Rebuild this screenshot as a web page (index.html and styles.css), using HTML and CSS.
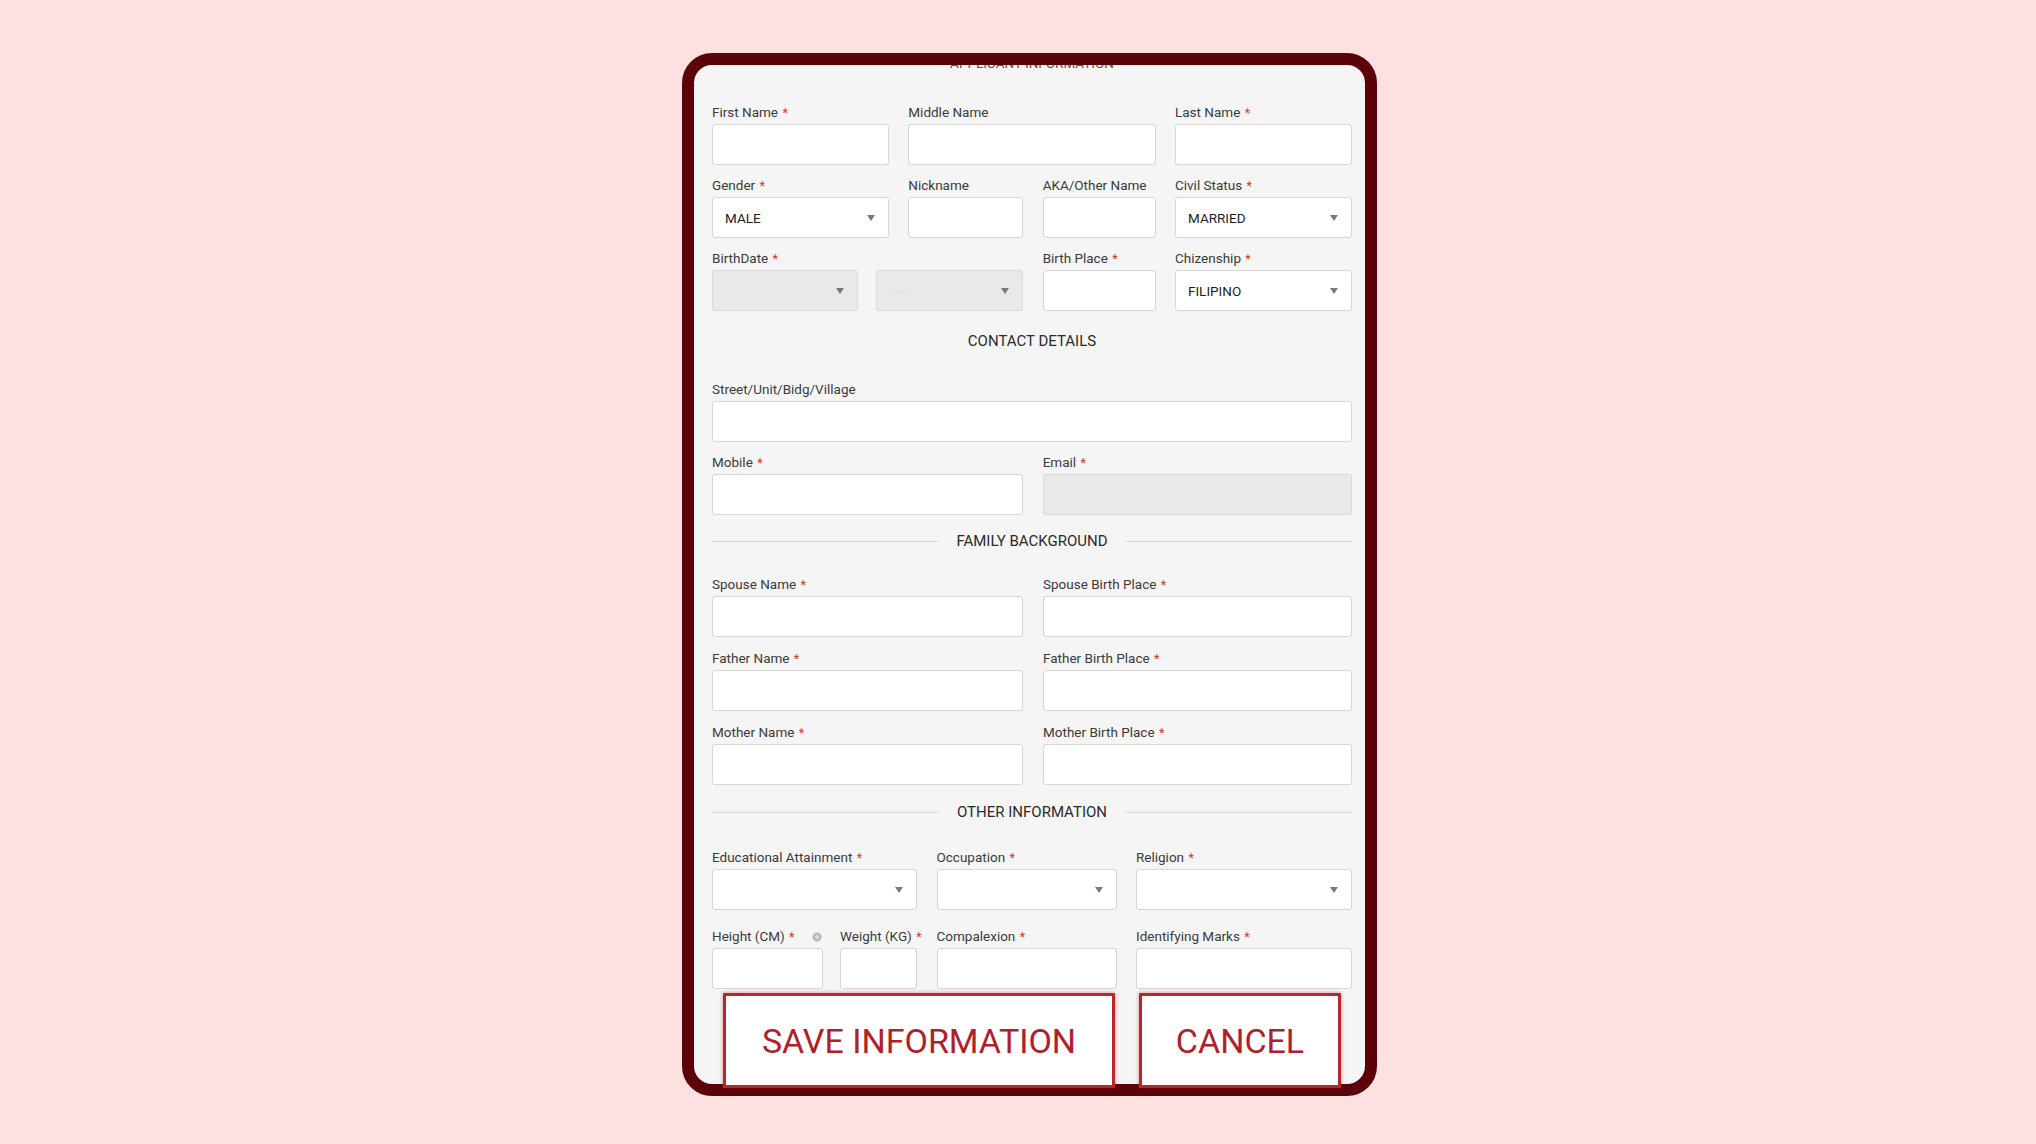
FILE: index.html
```html
<!DOCTYPE html>
<html lang="en">
<head>
<meta charset="utf-8">
<title>Applicant Information</title>
<link rel="stylesheet" href="styles.css">
</head>
<body>
<div class="stage">
  <div class="device">
    <div class="screen">
      <h2 class="title">APPLICANT INFORMATION</h2>

      <div class="grid grid4">
        <div class="field">
          <label>First Name <span class="req">*</span></label>
          <div class="input"></div>
        </div>
        <div class="field span2">
          <label>Middle Name</label>
          <div class="input"></div>
        </div>
        <div class="field">
          <label>Last Name <span class="req">*</span></label>
          <div class="input"></div>
        </div>

        <div class="field">
          <label>Gender <span class="req">*</span></label>
          <div class="input select"><span class="value">MALE</span><i class="caret"></i></div>
        </div>
        <div class="field">
          <label>Nickname</label>
          <div class="input"></div>
        </div>
        <div class="field">
          <label>AKA/Other Name</label>
          <div class="input"></div>
        </div>
        <div class="field">
          <label>Civil Status <span class="req">*</span></label>
          <div class="input select"><span class="value">MARRIED</span><i class="caret"></i></div>
        </div>

        <div class="field span2">
          <label>BirthDate <span class="req">*</span></label>
          <div class="pair">
            <div class="input select disabled"><span class="value"></span><i class="caret"></i></div>
            <div class="input select disabled"><span class="value placeholder">----</span><i class="caret"></i></div>
          </div>
        </div>
        <div class="field">
          <label>Birth Place <span class="req">*</span></label>
          <div class="input"></div>
        </div>
        <div class="field">
          <label>Chizenship <span class="req">*</span></label>
          <div class="input select"><span class="value">FILIPINO</span><i class="caret"></i></div>
        </div>
      </div>

      <h3 class="section plain">CONTACT DETAILS</h3>

      <div class="grid grid4">
        <div class="field span4">
          <label>Street/Unit/Bidg/Village</label>
          <div class="input"></div>
        </div>
        <div class="field span2">
          <label>Mobile <span class="req">*</span></label>
          <div class="input"></div>
        </div>
        <div class="field span2">
          <label>Email <span class="req">*</span></label>
          <div class="input disabled"></div>
        </div>
      </div>

      <h3 class="section lined family"><span>FAMILY BACKGROUND</span></h3>

      <div class="grid grid2 family-grid">
        <div class="field">
          <label>Spouse Name <span class="req">*</span></label>
          <div class="input"></div>
        </div>
        <div class="field">
          <label>Spouse Birth Place <span class="req">*</span></label>
          <div class="input"></div>
        </div>
        <div class="field">
          <label>Father Name <span class="req">*</span></label>
          <div class="input"></div>
        </div>
        <div class="field">
          <label>Father Birth Place <span class="req">*</span></label>
          <div class="input"></div>
        </div>
        <div class="field">
          <label>Mother Name <span class="req">*</span></label>
          <div class="input"></div>
        </div>
        <div class="field">
          <label>Mother Birth Place <span class="req">*</span></label>
          <div class="input"></div>
        </div>
      </div>

      <h3 class="section lined other"><span>OTHER INFORMATION</span></h3>

      <div class="grid grid3">
        <div class="field">
          <label>Educational Attainment <span class="req">*</span></label>
          <div class="input select"><span class="value"></span><i class="caret"></i></div>
        </div>
        <div class="field">
          <label>Occupation <span class="req">*</span></label>
          <div class="input select"><span class="value"></span><i class="caret"></i></div>
        </div>
        <div class="field">
          <label>Religion <span class="req">*</span></label>
          <div class="input select"><span class="value"></span><i class="caret"></i></div>
        </div>

        <div class="hw">
          <div class="field">
            <label class="with-icon"><span>Height (CM) <span class="req">*</span></span>
              <svg class="info" width="10" height="10" viewBox="0 0 10 10"><circle cx="5" cy="5" r="4.6" fill="#b9b9b9"/><circle cx="5" cy="5" r="2" fill="#dedede"/></svg>
            </label>
            <div class="input"></div>
          </div>
          <div class="field">
            <label>Weight (KG) <span class="req">*</span></label>
            <div class="input"></div>
          </div>
        </div>
        <div class="field">
          <label>Compalexion <span class="req">*</span></label>
          <div class="input"></div>
        </div>
        <div class="field">
          <label>Identifying Marks <span class="req">*</span></label>
          <div class="input"></div>
        </div>
      </div>
    </div>

    <button class="btn btn-save" type="button">SAVE INFORMATION</button>
    <button class="btn btn-cancel" type="button">CANCEL</button>
  </div>
</div>
</body>
</html>
```

FILE: styles.css
```css
* {
  box-sizing: border-box;
}

html, body {
  margin: 0;
  padding: 0;
}

body {
  background: #fde0df;
  font-family: Roboto, "Liberation Sans", Arial, sans-serif;
  color: #333;
  height: 1144px;
  overflow: hidden;
}

.stage {
  padding: 53px 0 0 682px;
}

.device {
  position: relative;
  width: 695px;
  height: 1043px;
  border: 12px solid #5c0309;
  border-radius: 30px;
  background: #5c0309;
}

.screen {
  height: 100%;
  border-radius: 18px;
  overflow: hidden;
  background: #f5f5f5;
  padding: 0 13px 0 18px;
}

.title {
  margin: -10px 0 35px;
  height: 16px;
  line-height: 16px;
  font-size: 13.5px;
  font-weight: 400;
  color: #555;
  text-align: center;
}

.grid {
  display: grid;
  row-gap: 14px;
}

.grid4 {
  grid-template-columns: 177px 115px 113px 177px;
  column-gap: 19.33px;
}

.grid2 {
  grid-template-columns: 311px 309px;
  column-gap: 20px;
}

.family-grid {
  row-gap: 15px;
}

.grid3 {
  grid-template-columns: 205px 180px 216px;
  column-gap: 19.5px;
  row-gap: 20px;
}

.span2 {
  grid-column: span 2;
}

.span4 {
  grid-column: span 4;
}

.field {
  display: flex;
  flex-direction: column;
  min-width: 0;
}

.field label {
  display: block;
  height: 13px;
  line-height: 13px;
  margin-bottom: 5px;
  font-size: 13.5px;
  color: #3b3b3b;
  white-space: nowrap;
}

.req {
  color: #d8352b;
  font-size: 12.5px;
  margin-left: 1px;
}

.input {
  height: 41px;
  background: #fff;
  border: 1px solid #d7d7d7;
  border-radius: 3px;
  box-shadow: 0 0 1px rgba(0, 0, 0, 0.05);
}

.input.disabled {
  background: #e9e9e9;
  border-color: #dadada;
}

.select {
  display: flex;
  align-items: center;
  justify-content: space-between;
  padding: 0 13px 0 12px;
}

.select .value {
  font-size: 13.5px;
  color: #1e1e1e;
}

.select .value.placeholder {
  font-size: 9px;
  color: #cfcfcf;
  padding-left: 4px;
  letter-spacing: 1px;
}

.caret {
  width: 0;
  height: 0;
  border-left: 4px solid transparent;
  border-right: 4px solid transparent;
  border-top: 6px solid #7a7a7a;
}

.pair {
  display: grid;
  grid-template-columns: 146px 147px;
  column-gap: 18px;
}

.section {
  margin: 0;
  height: 18px;
  line-height: 18px;
  font-size: 15px;
  font-weight: 400;
  color: #2b2b2b;
  text-align: center;
}

.section.plain {
  margin: 21px 0 33px;
}

.section.lined {
  display: flex;
  align-items: center;
  gap: 18px;
}

.section.lined::before,
.section.lined::after {
  content: "";
  flex: 1;
  height: 1px;
  background: #d6d6d6;
}

.section.family {
  margin: 17px 0 28px;
}

.section.other {
  margin: 18px 0 30px;
}

.hw {
  display: grid;
  grid-template-columns: 111px 77px;
  column-gap: 17px;
}

.with-icon {
  display: flex !important;
  justify-content: space-between;
  align-items: center;
}

.info {
  flex: none;
  margin-right: 1px;
}

.btn {
  position: absolute;
  top: 928px;
  height: 95px;
  background: #fff;
  border: 3px solid #b8262e;
  border-radius: 1px;
  box-shadow: 0 0 4px rgba(160, 20, 30, 0.45);
  font-family: Roboto, "Liberation Sans", Arial, sans-serif;
  font-size: 34px;
  font-weight: 400;
  color: #b1202a;
  padding: 0;
  cursor: pointer;
}

.btn-save {
  left: 29px;
  width: 392px;
}

.btn-cancel {
  left: 445px;
  width: 202px;
}
```
